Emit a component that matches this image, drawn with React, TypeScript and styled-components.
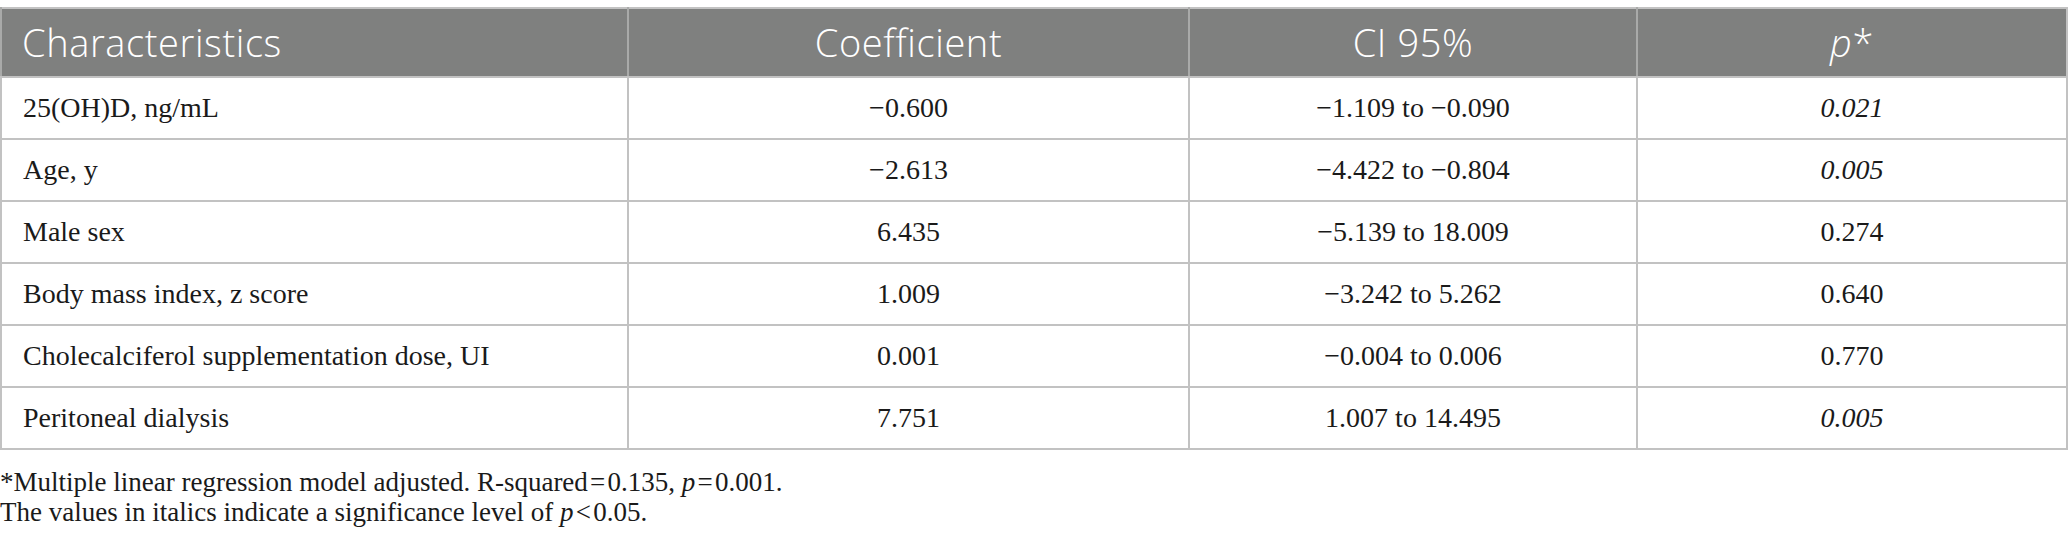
import React from "react";
import styled, { createGlobalStyle } from "styled-components";

const Global = createGlobalStyle`
  html, body { margin: 0; padding: 0; background: #ffffff; }
  body { font-family: "Liberation Serif", "Times New Roman", serif; color: #1a1a1a; }
`;

const Page = styled.div`
  padding-top: 7px;
  width: 2068px;
`;

const Table = styled.table`
  width: 2068px;
  border-collapse: collapse;
  table-layout: fixed;
  border: 2px solid #c2c2c2;
`;

const HeadRow = styled.tr`
  height: 69px;
  background: #7f807f;
`;

const Th = styled.th<{ $left?: boolean }>`
  font-family: "Open Sans", "Liberation Sans", sans-serif;
  font-weight: 300;
  font-size: 38px;
  letter-spacing: 0.6px;
  color: #ffffff;
  text-align: ${(p) => (p.$left ? "left" : "center")};
  padding: 0 0 2px ${(p) => (p.$left ? "20px" : "0")};
  border-left: 2px solid #a9aaa9;
  border-bottom: 2px solid #c2c2c2;
`;

const Row = styled.tr`
  height: 62px;
`;

const Td = styled.td<{ $left?: boolean; $italic?: boolean }>`
  font-size: 28px;
  text-align: ${(p) => (p.$left ? "left" : "center")};
  font-style: ${(p) => (p.$italic ? "italic" : "normal")};
  padding: 0 0 0 ${(p) => (p.$left ? "21px" : "0")};
  border: 2px solid #c2c2c2;
  color: #1a1a1a;
`;

const Notes = styled.div`
  padding-top: 17px;
  font-size: 27px;
  line-height: 30px;
  color: #1a1a1a;
`;

const Note = styled.p`
  margin: 0;
`;

const I = styled.i``;

type R = { name: string; coef: string; ci: string; p: string; sig: boolean };

const rows: R[] = [
  { name: "25(OH)D, ng/mL", coef: "\u22120.600", ci: "\u22121.109 to \u22120.090", p: "0.021", sig: true },
  { name: "Age, y", coef: "\u22122.613", ci: "\u22124.422 to \u22120.804", p: "0.005", sig: true },
  { name: "Male sex", coef: "6.435", ci: "\u22125.139 to 18.009", p: "0.274", sig: false },
  { name: "Body mass index, z score", coef: "1.009", ci: "\u22123.242 to 5.262", p: "0.640", sig: false },
  { name: "Cholecalciferol supplementation dose, UI", coef: "0.001", ci: "\u22120.004 to 0.006", p: "0.770", sig: false },
  { name: "Peritoneal dialysis", coef: "7.751", ci: "1.007 to 14.495", p: "0.005", sig: true },
];

export default function App() {
  return (
    <Page>
      <Global />
      <Table>
        <colgroup>
          <col style={{ width: 627 }} />
          <col style={{ width: 561 }} />
          <col style={{ width: 448 }} />
          <col />
        </colgroup>
        <thead>
          <HeadRow>
            <Th $left>Characteristics</Th>
            <Th>Coefficient</Th>
            <Th>CI 95%</Th>
            <Th>
              <I>p</I>*
            </Th>
          </HeadRow>
        </thead>
        <tbody>
          {rows.map((r) => (
            <Row key={r.name}>
              <Td $left>{r.name}</Td>
              <Td>{r.coef}</Td>
              <Td>{r.ci}</Td>
              <Td $italic={r.sig}>{r.p}</Td>
            </Row>
          ))}
        </tbody>
      </Table>
      <Notes>
        <Note>
          *Multiple linear regression model adjusted. R-squared&#8202;=&#8202;0.135, <I>p</I>&#8202;=&#8202;0.001.
        </Note>
        <Note>
          The values in italics indicate a significance level of <I>p</I>&#8202;&lt;&#8202;0.05.
        </Note>
      </Notes>
    </Page>
  );
}
